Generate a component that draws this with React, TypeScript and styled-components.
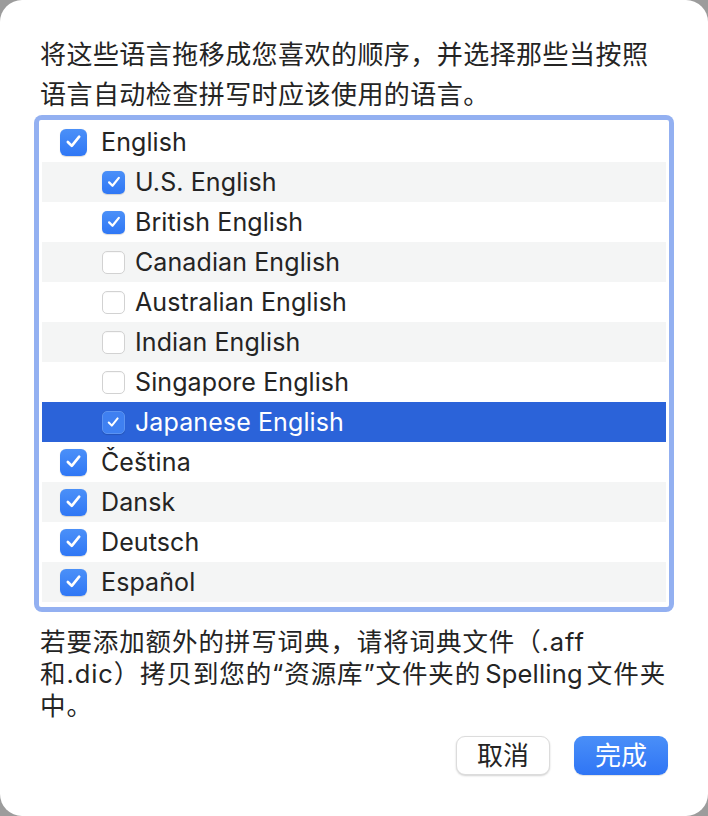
import React from "react";
import styled, { createGlobalStyle } from "styled-components";

const GlobalStyle = createGlobalStyle`
    html, body {
        margin: 0;
        padding: 0;
        background: #9c9c9c;
    }
    * {
        box-sizing: border-box;
    }
`;

const Sheet = styled.div`
    width: 708px;
    height: 816px;
    background: #ffffff;
    border-radius: 22px;
    padding: 35px 40px 0 40px;
    display: flex;
    flex-direction: column;
    font-family: Inter, "Noto Sans CJK SC", sans-serif;
    color: #242424;
`;

const Intro = styled.p`
    margin: 0;
    font-size: 26px;
    line-height: 40px;
    height: 80px;
    letter-spacing: 0.45px;
    white-space: nowrap;
`;

const ListFrame = styled.div`
    margin: 0 -6px;
    height: 497px;
    padding: 5px;
    border-radius: 8px;
    background: #93b0f1;
`;

const List = styled.div`
    height: 100%;
    background: #ffffff;
    border-radius: 2px;
    padding: 2px 3px 5px 3px;
    overflow: hidden;
`;

const Row = styled.div<{ $shade: boolean; $selected: boolean; $nested: boolean }>`
    height: 40px;
    display: flex;
    align-items: center;
    padding-left: ${({ $nested }) => ($nested ? "60px" : "18px")};
    gap: ${({ $nested }) => ($nested ? "10px" : "14px")};
    background: ${({ $selected, $shade }) =>
        $selected ? "#2b63d9" : $shade ? "#f4f5f5" : "#ffffff"};
    color: ${({ $selected }) => ($selected ? "#ffffff" : "#242424")};
    font-size: 25px;
    letter-spacing: 0.1px;
`;

const Box = styled.span<{ $checked: boolean; $big: boolean; $onBlue: boolean }>`
    width: ${({ $big }) => ($big ? "27px" : "23px")};
    height: ${({ $big }) => ($big ? "27px" : "23px")};
    border-radius: ${({ $big }) => ($big ? "6px" : "5px")};
    flex: none;
    display: flex;
    align-items: center;
    justify-content: center;
    background: ${({ $checked, $onBlue }) =>
        $onBlue ? "#3f80f1" : $checked ? "linear-gradient(#4b90f8, #2f77f5)" : "#ffffff"};
    border: ${({ $checked, $onBlue }) =>
        $onBlue ? "1px solid #5b93f2" : $checked ? "none" : "1px solid #d2d2d2"};
    box-shadow: ${({ $checked }) =>
        $checked ? "0 0.5px 1px rgba(0,0,0,0.15)" : "inset 0 1px 1px rgba(0,0,0,0.03)"};

    svg {
        width: 78%;
        height: 78%;
    }
`;

const Note = styled.p`
    margin: 14px 0 0 0;
    font-size: 25.5px;
    line-height: 32px;
    letter-spacing: 0.9px;
    white-space: nowrap;
`;

const Latin = styled.span`
    margin: 0 4px;
    letter-spacing: 0.2px;
`;

const Buttons = styled.div`
    margin-top: 14px;
    display: flex;
    justify-content: flex-end;
    gap: 24px;
`;

const Button = styled.button<{ $primary?: boolean }>`
    width: 94px;
    height: 39px;
    border-radius: 9px;
    font-family: Inter, "Noto Sans CJK SC", sans-serif;
    font-size: 26px;
    line-height: 1;
    padding: 0;
    border: ${({ $primary }) => ($primary ? "none" : "1px solid #dcdcdc")};
    background: ${({ $primary }) =>
        $primary ? "linear-gradient(#4a8ff8, #2f75f5)" : "#ffffff"};
    color: ${({ $primary }) => ($primary ? "#ffffff" : "#242424")};
    box-shadow: ${({ $primary }) =>
        $primary ? "0 1px 1px rgba(0,0,0,0.12)" : "0 1px 2px rgba(0,0,0,0.18)"};
`;

const Check = () => (
    <svg viewBox="0 0 24 24" fill="none">
        <path
            d="M5.5 12.5 L10 17 L18.5 6.5"
            stroke="#ffffff"
            strokeWidth="3"
            strokeLinecap="round"
            strokeLinejoin="round"
        />
    </svg>
);

const languages = [
    { name: "English", checked: true, nested: false },
    { name: "U.S. English", checked: true, nested: true },
    { name: "British English", checked: true, nested: true },
    { name: "Canadian English", checked: false, nested: true },
    { name: "Australian English", checked: false, nested: true },
    { name: "Indian English", checked: false, nested: true },
    { name: "Singapore English", checked: false, nested: true },
    { name: "Japanese English", checked: true, nested: true, selected: true },
    { name: "Čeština", checked: true, nested: false },
    { name: "Dansk", checked: true, nested: false },
    { name: "Deutsch", checked: true, nested: false },
    { name: "Español", checked: true, nested: false },
];

export default function App() {
    return (
        <>
            <GlobalStyle />
            <Sheet>
                <Intro>
                    将这些语言拖移成您喜欢的顺序，并选择那些当按照
                    <br />
                    语言自动检查拼写时应该使用的语言。
                </Intro>
                <ListFrame>
                    <List>
                        {languages.map((lang, i) => (
                            <Row
                                key={lang.name}
                                $shade={i % 2 === 1}
                                $selected={!!lang.selected}
                                $nested={lang.nested}
                            >
                                <Box
                                    $checked={lang.checked}
                                    $big={!lang.nested}
                                    $onBlue={!!lang.selected}
                                >
                                    {lang.checked && <Check />}
                                </Box>
                                {lang.name}
                            </Row>
                        ))}
                    </List>
                </ListFrame>
                <Note>
                    若要添加额外的拼写词典，请将词典文件（.aff
                    <br />
                    和.dic）拷贝到您的“资源库”文件夹的<Latin>Spelling</Latin>文件夹
                    <br />
                    中。
                </Note>
                <Buttons>
                    <Button>取消</Button>
                    <Button $primary>完成</Button>
                </Buttons>
            </Sheet>
        </>
    );
}
